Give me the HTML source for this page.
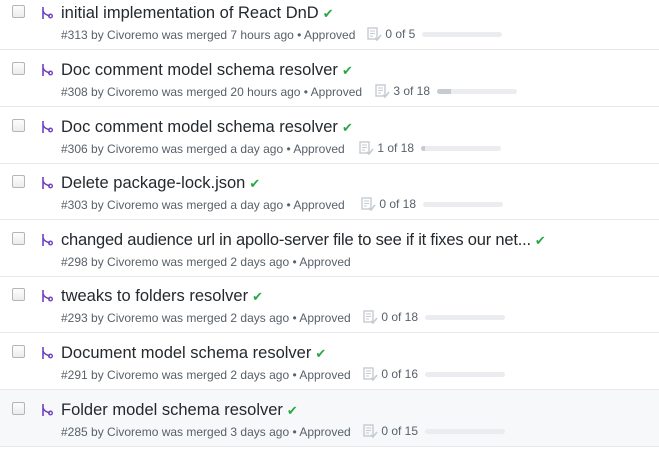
<!DOCTYPE html>
<html><head><meta charset="utf-8"><style>
body{margin:0;width:659px;height:454px;overflow:hidden;background:#fff;font-family:"Liberation Sans",sans-serif;position:relative}
.row{position:absolute;left:0;width:659px;height:56px;border-bottom:1px solid #e6e8eb}
.cb{position:absolute;left:12px;width:11px;height:11px;border:1px solid #b5b5b5;border-radius:2px;background:linear-gradient(#fdfdfd,#ececec)}
.mi{position:absolute;left:41px}
.t{position:absolute;left:61px;font-size:16.5px;color:#24292e;white-space:nowrap}
.ck{color:#28a745;font-size:13px;margin-left:4px}
.m{position:absolute;left:61px;font-size:12px;color:#586069;white-space:nowrap}
.tk{position:absolute;font-size:12px;color:#586069;white-space:nowrap;display:flex;align-items:center}
.bar{display:inline-block;width:80px;height:5px;background:#eaecef;border-radius:3px;margin-left:7px;position:relative;overflow:hidden}
.bar i{position:absolute;left:0;top:0;bottom:0;background:#c6cbd1}
</style></head><body>
<svg width="0" height="0" style="position:absolute"><defs>
<g id="mg"><path d="M2 1v12" stroke="#6f42c1" stroke-width="1.6" fill="none"/><path d="M2 5c1 3 4 4 7 5" stroke="#6f42c1" stroke-width="1.6" fill="none"/><circle cx="9.5" cy="10" r="1.8" fill="none" stroke="#6f42c1" stroke-width="1.4"/></g>
<g id="tl"><rect x="1" y="1" width="9" height="11" fill="none" stroke="#c6cbd1" stroke-width="1.4"/><path d="M3 4h5M3 6.5h5M3 9h3" stroke="#c6cbd1" stroke-width="1"/><path d="M8 11l2 2 4-5" stroke="#c6cbd1" stroke-width="1.6" fill="none"/></g>
</defs></svg>

<div class="row" style="top:-7px"><div class="cb" style="top:12px"></div><svg class="mi" style="top:13px" width="13" height="14"><use href="#mg"/></svg><div class="t" style="top:11px">initial implementation of React DnD<span class="ck">✔</span></div><div class="m" style="top:35px">#313 by Civoremo was merged 7 hours ago • Approved</div><div class="tk" style="left:367px;top:34px"><svg width="15" height="14"><use href="#tl"/></svg>&nbsp;0 of 5<span class="bar"></span></div></div>

<div class="row" style="top:50px"><div class="cb" style="top:12px"></div><svg class="mi" style="top:13px" width="13" height="14"><use href="#mg"/></svg><div class="t" style="top:11px">Doc comment model schema resolver<span class="ck">✔</span></div><div class="m" style="top:35px">#308 by Civoremo was merged 20 hours ago • Approved</div><div class="tk" style="left:375px;top:34px"><svg width="15" height="14"><use href="#tl"/></svg>&nbsp;3 of 18<span class="bar"><i style="width:14px"></i></span></div></div>

<div class="row" style="top:107px"><div class="cb" style="top:12px"></div><svg class="mi" style="top:13px" width="13" height="14"><use href="#mg"/></svg><div class="t" style="top:11px">Doc comment model schema resolver<span class="ck">✔</span></div><div class="m" style="top:35px">#306 by Civoremo was merged a day ago • Approved</div><div class="tk" style="left:359px;top:34px"><svg width="15" height="14"><use href="#tl"/></svg>&nbsp;1 of 18<span class="bar"><i style="width:4px"></i></span></div></div>

<div class="row" style="top:163px"><div class="cb" style="top:12px"></div><svg class="mi" style="top:13px" width="13" height="14"><use href="#mg"/></svg><div class="t" style="top:11px">Delete package-lock.json<span class="ck">✔</span></div><div class="m" style="top:35px">#303 by Civoremo was merged a day ago • Approved</div><div class="tk" style="left:361px;top:34px"><svg width="15" height="14"><use href="#tl"/></svg>&nbsp;0 of 18<span class="bar"></span></div></div>

<div class="row" style="top:220px"><div class="cb" style="top:12px"></div><svg class="mi" style="top:13px" width="13" height="14"><use href="#mg"/></svg><div class="t" style="top:11px;letter-spacing:-0.2px">changed audience url in apollo-server file to see if it fixes our net...<span class="ck">✔</span></div><div class="m" style="top:35px">#298 by Civoremo was merged 2 days ago • Approved</div></div>

<div class="row" style="top:276px"><div class="cb" style="top:12px"></div><svg class="mi" style="top:13px" width="13" height="14"><use href="#mg"/></svg><div class="t" style="top:11px">tweaks to folders resolver<span class="ck">✔</span></div><div class="m" style="top:35px">#293 by Civoremo was merged 2 days ago • Approved</div><div class="tk" style="left:363px;top:34px"><svg width="15" height="14"><use href="#tl"/></svg>&nbsp;0 of 18<span class="bar"></span></div></div>

<div class="row" style="top:333px"><div class="cb" style="top:12px"></div><svg class="mi" style="top:13px" width="13" height="14"><use href="#mg"/></svg><div class="t" style="top:11px">Document model schema resolver<span class="ck">✔</span></div><div class="m" style="top:35px">#291 by Civoremo was merged 2 days ago • Approved</div><div class="tk" style="left:363px;top:34px"><svg width="15" height="14"><use href="#tl"/></svg>&nbsp;0 of 16<span class="bar"></span></div></div>

<div class="row" style="top:390px;background:#f6f8fa"><div class="cb" style="top:12px"></div><svg class="mi" style="top:13px" width="13" height="14"><use href="#mg"/></svg><div class="t" style="top:11px">Folder model schema resolver<span class="ck">✔</span></div><div class="m" style="top:35px">#285 by Civoremo was merged 3 days ago • Approved</div><div class="tk" style="left:363px;top:34px"><svg width="15" height="14"><use href="#tl"/></svg>&nbsp;0 of 15<span class="bar"></span></div></div>
</body></html>
